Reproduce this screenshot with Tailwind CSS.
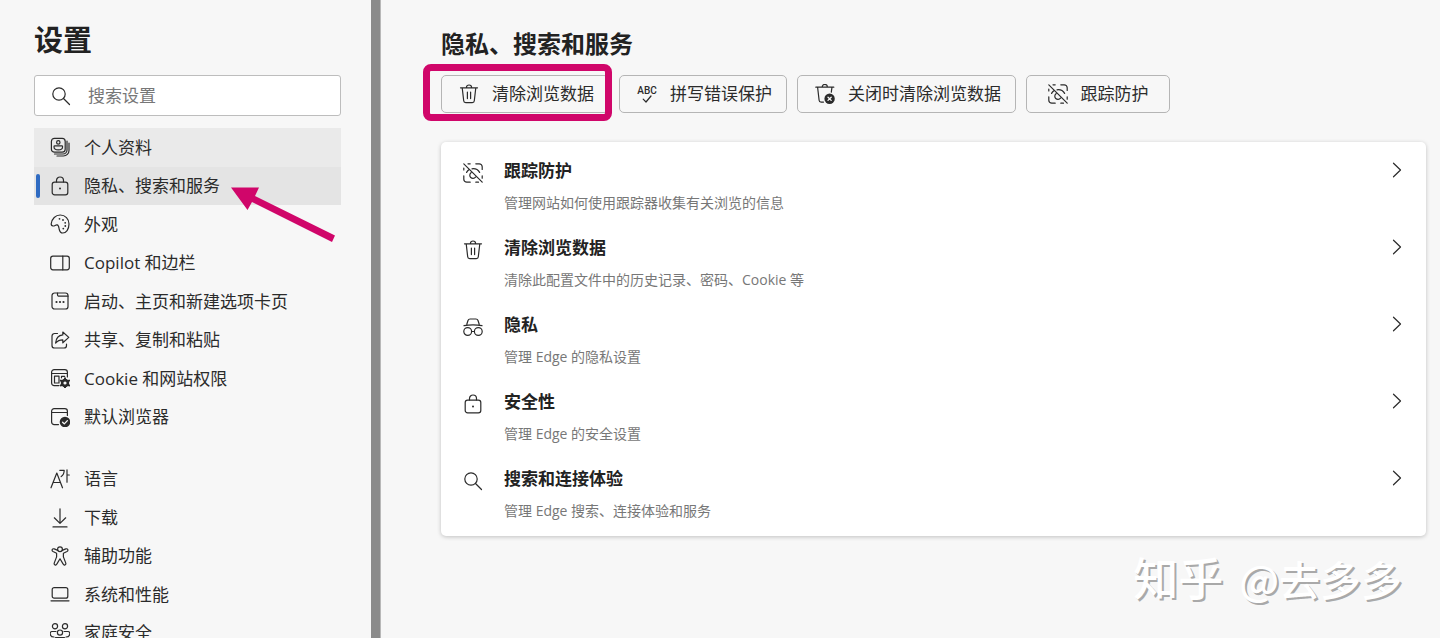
<!DOCTYPE html>
<html lang="zh-CN">
<head>
  <meta charset="UTF-8" />
  <meta name="viewport" content="width=device-width, initial-scale=1.0" />
  <title>设置</title>
  <script src="https://cdn.jsdelivr.net/npm/@tailwindcss/browser@4"></script>
</head>
<body class="flex h-screen overflow-hidden bg-[#f7f7f7] fill-none stroke-current font-['Open_Sans','Noto_Sans_CJK_SC',sans-serif] text-[17px] text-[#2b2b2b] [stroke-linecap:round] [stroke-linejoin:round] [stroke-width:1.2]">

  <!-- icon sprite -->
  <svg class="hidden">
    <symbol id="i-search" viewBox="0 0 20 20"><circle cx="8" cy="8" r="6.2" /><path d="M12.5 12.5l6 6" /></symbol>
    <symbol id="i-profile" viewBox="0 0 20 20">
      <rect x="1.4" y="1.4" width="13.8" height="13.8" rx="3" />
      <circle cx="8.3" cy="5.4" r="1.7" />
      <path d="M4.800 8.900h7a.8.8 0 0 1 .8.8c0 2.200-2 3.200-4.300 3.200S4 11.900 4 9.700a.8.8 0 0 1 .8-.8z" />
      <path d="M17 4v9a4 4 0 0 1-4 4H4.500M19 6v7.400a5.600 5.600 0 0 1-5.600 5.600H7" />
    </symbol>
    <symbol id="i-lock" viewBox="0 0 20 20">
      <rect x="2.200" y="6.200" width="15.600" height="12.600" rx="2.400" />
      <path d="M6.500 6V4.500a3.500 3.500 0 0 1 7 0V6" />
      <circle cx="10" cy="12.500" r="1" fill="currentColor" stroke="none" />
    </symbol>
    <symbol id="i-palette" viewBox="0 0 20 20">
      <path d="M1.200 9.800C1.800 4.600 5.600 1 10.200 1c5 0 8.800 3.800 8.800 9 0 5.400-3 9-6.200 9-2.600 0-3.300-2-3.700-4.200-.3-1.800-.4-3.600-2-3.900-1.600-.3-2.400 1.300-4.100 1.100-1.300-.2-1.900-1-1.800-2.200z" />
      <g fill="currentColor" stroke="none"><circle cx="9.500" cy="4.800" r=".9" /><circle cx="13" cy="6" r=".9" /><circle cx="15.200" cy="8.800" r=".9" /><circle cx="15.300" cy="12" r=".9" /><circle cx="13.300" cy="14.600" r=".9" /></g>
    </symbol>
    <symbol id="i-sidebar" viewBox="0 0 20 20"><rect x=".7" y="3.200" width="18.600" height="13.600" rx="2.200" /><path d="M12.800 3.200v13.600" /></symbol>
    <symbol id="i-tab" viewBox="0 0 20 20">
      <rect x="2" y="2" width="16" height="16" rx="2.600" />
      <path d="M7.500 2v1.700A1.500 1.500 0 0 0 9 5.200h9" />
      <g fill="currentColor" stroke="none"><circle cx="6.500" cy="11" r="1.100" /><circle cx="10" cy="11" r="1.100" /><circle cx="13.500" cy="11" r="1.100" /></g>
    </symbol>
    <symbol id="i-share" viewBox="0 0 20 20">
      <path d="M7.500 3.500H4.600A2.600 2.600 0 0 0 2 6.100v9.300A2.600 2.600 0 0 0 4.600 18h9.300a2.600 2.600 0 0 0 2.600-2.600v-1.200" />
      <path d="M12.800 2l6 5.400-6 5.400V9.900c-3.200 0-5.200.8-7.200 3.200.4-4.600 2.800-7.800 7.200-8.200z" />
    </symbol>
    <symbol id="i-cookie" viewBox="0 0 20 20">
      <path d="M9 17.600H4.200A2.600 2.600 0 0 1 1.600 15V4.200a2.600 2.600 0 0 1 2.600-2.600h10.600a2.600 2.600 0 0 1 2.600 2.600V9M1.600 5.500h15.800" />
      <path d="M9 15H4.500V8.200H9zM11.500 8.300h3.200M11.500 8.300v1.500" />
      <circle cx="15" cy="15" r="2.900" stroke-width="2.600" />
      <path d="M15 10.300v1.500M15 18.200v1.500M10.900 12.600l1.300.8M17.800 16.600l1.300.8M10.900 17.400l1.300-.8M17.800 13.400l1.300-.8" stroke-width="2" />
    </symbol>
    <symbol id="i-default" viewBox="0 0 20 20">
      <path d="M8.500 17.600H4.200A2.600 2.600 0 0 1 1.600 15V4.200a2.600 2.600 0 0 1 2.600-2.600h10.600a2.600 2.600 0 0 1 2.600 2.600v4.300M1.600 5.500h15.800" />
      <circle cx="15" cy="15" r="5.300" fill="currentColor" stroke="none" />
      <path d="M12.600 15.200l1.700 1.700 3.100-3.300" stroke="#f7f7f7" stroke-width="1.300" />
    </symbol>
    <symbol id="i-language" viewBox="0 0 20 20"><path d="M1 18.800L6.800 4l5.700 14.800M3 13.500h7.500M9.800 1.300h4.400c0 3.200-1 5-3 6.300M17 .8v12.400M17 6h2.300" /></symbol>
    <symbol id="i-download" viewBox="0 0 20 20"><path d="M10 .8v14.200M4.300 9.800L10 15.400l5.700-5.600M3 18.900h14" /></symbol>
    <symbol id="i-access" viewBox="0 0 20 20">
      <circle cx="10" cy="3.200" r="2.400" />
      <path d="M7.800 4.400L4.200 2.900c-1.900-.7-2.900 1.700-1.200 2.600l3.600 1.700v3.700l-2.300 6c-.7 2 1.700 2.900 2.500 1.200L10 12.800l3.200 5.300c.8 1.700 3.200.8 2.500-1.200l-2.300-6V7.200L17 5.500c1.700-.9.700-3.300-1.200-2.600l-3.600 1.500" />
    </symbol>
    <symbol id="i-laptop" viewBox="0 0 20 20"><rect x="2.200" y="3.600" width="15.600" height="10.600" rx="2" /><path d="M1 16.800h18" /></symbol>
    <symbol id="i-family" viewBox="0 0 20 20">
      <circle cx="5" cy="3.200" r="2.600" /><circle cx="15" cy="3.200" r="2.600" /><circle cx="10" cy="9.600" r="2.600" />
      <path d="M6 8.500H1.800C-.6 8.500-.6 14 4 14M14 8.500h4.200c2.400 0 2.400 5.500-2.200 5.500M5.500 14.600h9c1 3-1.500 4.800-4.500 4.800s-5.500-1.800-4.500-4.800z" />
    </symbol>
    <symbol id="i-trash" viewBox="0 0 20 20"><path d="M1.500 3.800h17M3.200 3.800l1.500 13a2 2 0 0 0 2 1.900h6.600a2 2 0 0 0 2-1.900l1.500-13M7.400 3.600a2.600 2.600 0 0 1 5.200 0M8.400 8v6.600M11.600 8v6.600" /></symbol>
    <symbol id="i-trash-x" viewBox="0 0 20 20">
      <path d="M.8 3.200h18M2.600 3.200l1.500 13a2 2 0 0 0 2 1.900h2.400M17 3.200l-.7 5M7.200 3a2.600 2.600 0 0 1 5.200 0" />
      <circle cx="14.600" cy="14.800" r="5.200" fill="currentColor" stroke="none" />
      <path d="M13 13.200l3.200 3.200M16.200 13.200L13 16.400" stroke="#f7f7f7" stroke-width="1.300" />
    </symbol>
    <symbol id="i-check" viewBox="0 0 10 8"><path d="M1.200 4.200L4 7l5-6" /></symbol>
    <symbol id="i-tracking" viewBox="0 0 20 20">
      <path d="M5 .8h2.200M12.800.8h3.400a3 3 0 0 1 3 3v2.700M.8 5v2M.8 12.800v3.400a3 3 0 0 0 3 3h3.400M12.800 19.200h2.700M19.200 12.800v2.400" />
      <path d="M.8.8l18.400 18.400M3.600 9.400c.6-1.100 1.200-1.800 2-2.400M9 5.800c3.500-.4 6.100.9 7.600 3.600M8 9.700a3.200 3.200 0 1 0 4.500 4.500" />
    </symbol>
    <symbol id="i-incognito" viewBox="0 0 20 20">
      <circle cx="4.700" cy="14.500" r="3.900" /><circle cx="15.300" cy="14.500" r="3.900" />
      <path d="M8.600 14.500h2.800M1 8.600c6-1 12-1 18 0M3.800 7.200L5 3.500A2.200 2.200 0 0 1 7.100 2h5.800A2.200 2.200 0 0 1 15 3.500l1.200 3.700" />
    </symbol>
    <symbol id="i-chevron" viewBox="0 0 10 16"><path d="M1.500 1.200L8.500 8l-7 6.800" /></symbol>
  </svg>

  <aside class="relative w-[371px] shrink-0 pt-5 pr-[30px] pl-[34px]">
    <h1 class="text-[29px] leading-10 font-bold text-[#222]">设置</h1>

    <label class="mt-[15px] flex h-[41px] items-center gap-[17px] rounded-[3px] border border-[#bdbdbd] bg-white pl-4">
      <svg class="size-5"><use href="#i-search" /></svg>
      <input type="search" aria-label="搜索设置" placeholder="搜索设置" class="min-w-0 flex-1 outline-none placeholder:text-[#777]" />
    </label>

    <nav class="mt-3">
      <div class="grid h-77 grid-rows-8">
        <a href="#" class="flex items-center gap-[14px] bg-[#eaeaea] pl-4"><svg class="size-5"><use href="#i-profile" /></svg>个人资料</a>
        <a href="#" class="relative flex items-center gap-[14px] bg-[#e4e4e4] pl-4" aria-current="page">
          <span class="absolute left-[2px] h-6 w-1 rounded-full bg-[#2f6bc2]"></span>
          <svg class="size-5"><use href="#i-lock" /></svg>隐私、搜索和服务
        </a>
        <a href="#" class="flex items-center gap-[14px] pl-4"><svg class="size-5"><use href="#i-palette" /></svg>外观</a>
        <a href="#" class="flex items-center gap-[14px] pl-4"><svg class="size-5"><use href="#i-sidebar" /></svg>Copilot 和边栏</a>
        <a href="#" class="flex items-center gap-[14px] pl-4"><svg class="size-5"><use href="#i-tab" /></svg>启动、主页和新建选项卡页</a>
        <a href="#" class="flex items-center gap-[14px] pl-4"><svg class="size-5"><use href="#i-share" /></svg>共享、复制和粘贴</a>
        <a href="#" class="flex items-center gap-[14px] pl-4"><svg class="size-5"><use href="#i-cookie" /></svg>Cookie 和网站权限</a>
        <a href="#" class="flex items-center gap-[14px] pl-4"><svg class="size-5"><use href="#i-default" /></svg>默认浏览器</a>
      </div>
      <div class="mt-6 grid h-48 grid-rows-5">
        <a href="#" class="flex items-center gap-[14px] pl-4"><svg class="size-5"><use href="#i-language" /></svg>语言</a>
        <a href="#" class="flex items-center gap-[14px] pl-4"><svg class="size-5"><use href="#i-download" /></svg>下载</a>
        <a href="#" class="flex items-center gap-[14px] pl-4"><svg class="size-5"><use href="#i-access" /></svg>辅助功能</a>
        <a href="#" class="flex items-center gap-[14px] pl-4"><svg class="size-5"><use href="#i-laptop" /></svg>系统和性能</a>
        <a href="#" class="flex items-center gap-[14px] pl-4"><svg class="size-5"><use href="#i-family" /></svg>家庭安全</a>
      </div>
    </nav>

    <!-- arrow pointing at the active item -->
    <svg class="absolute top-[185px] left-[230px] h-[60px] w-[110px]" viewBox="0 0 110 60" fill="#d0066a" stroke="none">
      <path d="M1 2.500h28l-4 8.500 80 39.500-3 6.500-80-40-4.500 8z" />
    </svg>
  </aside>

  <div class="w-[10px] shrink-0 border-r border-[#b8b8b8] bg-[#8b8b8b]"></div>

  <main class="relative min-w-0 flex-1 pt-7 pr-[14px] pl-[60px]">
    <h2 class="text-[24px] leading-8 font-bold text-[#222]">隐私、搜索和服务</h2>

    <div class="mt-[15px] flex gap-[10px]">
      <div class="relative">
        <button class="flex h-[38px] min-w-36 items-center justify-center gap-[13px] rounded-[5px] border border-[#b5b5b5] pr-[14px] pl-[17px]"><svg class="size-5"><use href="#i-trash" /></svg>清除浏览数据</button>
        <span class="pointer-events-none absolute -top-[11px] -right-[3px] -bottom-2 -left-[18px] rounded-lg border-7 border-[#d0066a]"></span>
      </div>
      <button class="flex h-[38px] min-w-36 items-center justify-center gap-[13px] rounded-[5px] border border-[#b5b5b5] pr-[14px] pl-[17px]">
        <span class="flex w-5 flex-col items-center font-[Roboto] text-[10px] leading-[9px] font-medium">ABC<svg class="h-2 w-[10px]"><use href="#i-check" /></svg></span>拼写错误保护
      </button>
      <button class="flex h-[38px] min-w-36 items-center justify-center gap-[13px] rounded-[5px] border border-[#b5b5b5] pr-[14px] pl-[17px]"><svg class="size-5"><use href="#i-trash-x" /></svg>关闭时清除浏览数据</button>
      <button class="flex h-[38px] min-w-36 items-center justify-center gap-[13px] rounded-[5px] border border-[#b5b5b5] px-[14px]"><svg class="size-5"><use href="#i-tracking" /></svg>跟踪防护</button>
    </div>

    <section class="mt-[29px] flex flex-col gap-[13px] rounded-[5px] bg-white pt-[13px] pr-6 pb-[9px] pl-[22px] shadow-[0_1px_4px_rgba(0,0,0,0.22)]">
      <a href="#" class="flex">
        <svg class="mt-2 mr-[21px] size-5"><use href="#i-tracking" /></svg>
        <div class="flex-1 leading-8"><h3 class="font-bold text-[#222]">跟踪防护</h3><p class="text-[14px] leading-8 text-[#777]">管理网站如何使用跟踪器收集有关浏览的信息</p></div>
        <svg class="mt-[7px] h-4 w-[10px]"><use href="#i-chevron" /></svg>
      </a>
      <a href="#" class="flex">
        <svg class="mt-2 mr-[21px] size-5"><use href="#i-trash" /></svg>
        <div class="flex-1 leading-8"><h3 class="font-bold text-[#222]">清除浏览数据</h3><p class="text-[14px] leading-8 text-[#777]">清除此配置文件中的历史记录、密码、Cookie 等</p></div>
        <svg class="mt-[7px] h-4 w-[10px]"><use href="#i-chevron" /></svg>
      </a>
      <a href="#" class="flex">
        <svg class="mt-2 mr-[21px] size-5"><use href="#i-incognito" /></svg>
        <div class="flex-1 leading-8"><h3 class="font-bold text-[#222]">隐私</h3><p class="text-[14px] leading-8 text-[#777]">管理 Edge 的隐私设置</p></div>
        <svg class="mt-[7px] h-4 w-[10px]"><use href="#i-chevron" /></svg>
      </a>
      <a href="#" class="flex">
        <svg class="mt-2 mr-[21px] size-5"><use href="#i-lock" /></svg>
        <div class="flex-1 leading-8"><h3 class="font-bold text-[#222]">安全性</h3><p class="text-[14px] leading-8 text-[#777]">管理 Edge 的安全设置</p></div>
        <svg class="mt-[7px] h-4 w-[10px]"><use href="#i-chevron" /></svg>
      </a>
      <a href="#" class="flex">
        <svg class="mt-2 mr-[21px] size-5"><use href="#i-search" /></svg>
        <div class="flex-1 leading-8"><h3 class="font-bold text-[#222]">搜索和连接体验</h3><p class="text-[14px] leading-8 text-[#777]">管理 Edge 搜索、连接体验和服务</p></div>
        <svg class="mt-[7px] h-4 w-[10px]"><use href="#i-chevron" /></svg>
      </a>
    </section>

    <!-- watermark -->
    <p class="absolute right-[38px] bottom-[30px] flex items-baseline gap-4 font-['Noto_Sans_CJK_SC',sans-serif] text-[41px] leading-[60px] font-medium text-white [text-shadow:2px_2px_0_#a9a9a9]">
      <span class="text-[45px]">知乎</span><span>@去多多</span>
    </p>
  </main>
</body>
</html>
